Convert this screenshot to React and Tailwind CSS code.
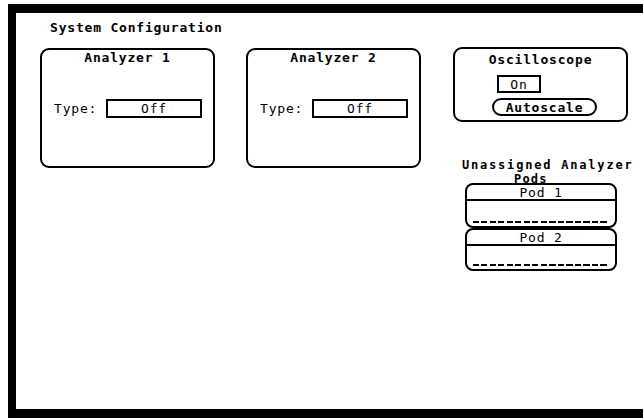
import React from 'react';

const font = "font-['DejaVu_Sans_Mono',monospace] text-[13px] tracking-[0.8px] leading-none text-black";

const AnalyzerBox = ({ name, className }) => (
  <div className={`w-[175px] h-[120px] border-2 border-black rounded-[9px] ${className || ''}`}>
    <div className="pt-[1px] text-center font-bold">{name}</div>
    <div className="flex items-center mt-[35px] pl-[12px]">
      <span className="w-[52px]">Type:</span>
      <div className="w-[96px] h-[19px] border-2 border-black flex items-center justify-center">
        Off
      </div>
    </div>
  </div>
);

const Pod = ({ name, height }) => (
  <div className={`w-[152px] ${height} border-2 border-black rounded-[8px] flex flex-col`}>
    <div className="h-[16px] flex items-center justify-center border-b-2 border-black">
      {name}
    </div>
    <div className="flex-1 flex flex-col justify-end pb-[3px] px-[6px]">
      <div className="h-[2px] bg-[repeating-linear-gradient(90deg,#000_0_6px,transparent_6px_8.5px)]" />
    </div>
  </div>
);

export default function App() {
  return (
    <div className={`w-[643px] h-[418px] bg-white pt-[4px] pl-[8px] flex ${font}`}>
      <div className="flex-1 border-t-[9px] border-l-[8px] border-b-[9px] border-black">
        <div className="pl-[34px] pt-[8px] font-bold">System Configuration</div>

        <div className="flex items-start pl-[24px] mt-[14px]">
          <AnalyzerBox name="Analyzer 1" />
          <AnalyzerBox name="Analyzer 2" className="ml-[31px]" />

          <div className="ml-[32px] -mt-[1px] w-[175px] flex flex-col">
            <div className="h-[75px] border-2 border-black rounded-[9px] flex flex-col">
              <div className="pt-[4px] text-center font-bold">Oscilloscope</div>
              <div className="mt-[9px] ml-[42px] w-[44px] h-[18px] border-2 border-black flex items-center justify-center">
                On
              </div>
              <div className="mt-[5px] ml-[37px] w-[105px] h-[18px] border-2 border-black rounded-full flex items-center justify-center font-bold">
                Autoscale
              </div>
            </div>

            <div className="mt-[36px] pl-[9px] h-[14px] text-[12px] leading-[14px] font-bold tracking-[1.8px] whitespace-nowrap">
              Unassigned Analyzer
            </div>
            <div className="pl-[61px] h-[14px] text-[12px] leading-[14px] tracking-[1.2px] font-bold">Pods</div>

            <div className="pl-[12px] -mt-[3px] flex flex-col">
              <Pod name="Pod 1" height="h-[45px]" />
              <Pod name="Pod 2" height="h-[43px]" />
            </div>
          </div>
        </div>
      </div>
    </div>
  );
}
